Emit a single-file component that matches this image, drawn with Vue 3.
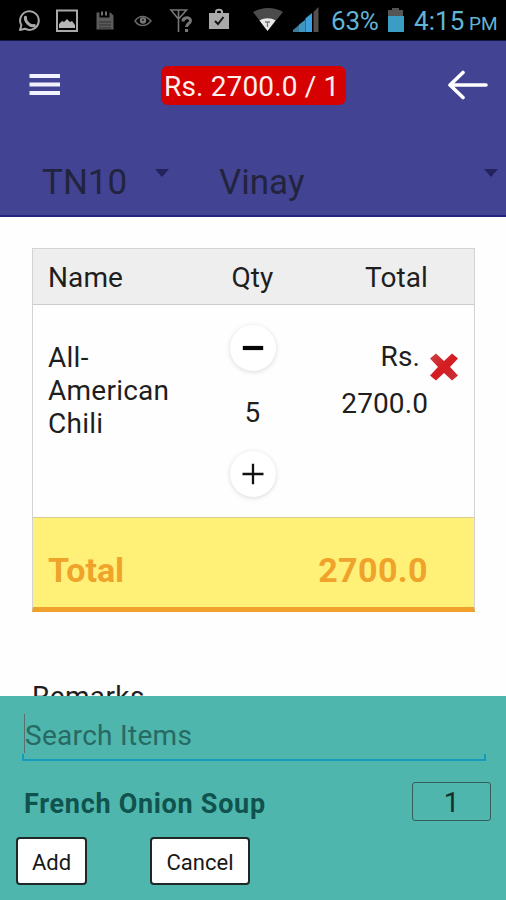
<script setup>
import { ref } from 'vue'

const table = ref('TN10')
const waiter = ref('Vinay')
const qty = ref(5)
const total = ref('2700.0')
</script>

<template>
  <div class="screen">
    <div class="status">
      <svg class="notifications" viewBox="0 0 253 40" width="253" height="40" fill="none">
        <g stroke="#a9a9a9" stroke-width="2">
          <path d="M20 30 21.4 25.2A9.3 9.3 0 1 1 25 28.7Z" stroke-linejoin="round" />
          <path d="M25.5 17.2c-1 4 4.500 9.500 8.800 8.300" stroke-width="3" stroke-linecap="round" />
          <rect x="57" y="10.500" width="20" height="20.500" />
        </g>
        <path d="M59 28V24l3-3 2 1 3-3 3 3 2-1 3 4v3Z" fill="#b5b5b5" />
        <path d="M96.500 12.500h3v5h10v-5h1l3 3v14h-17Z" fill="#5b5b5b" />
        <path d="M102 11.500v4M106 11.500v4" stroke="#707070" stroke-width="2" />
        <path d="M99 22h12M99 25h12M99 28h12" stroke="#303030" />
        <path d="M135 21c4-6 11-6 16 0-5 6-12 6-16 0Z" stroke="#686868" stroke-width="1.500" />
        <circle cx="143" cy="20.500" r="3.200" fill="#777" /><circle cx="143" cy="20" r="1" fill="#222" />
        <path d="M171 10h15.500l-7 8h-2ZM178.500 10v22" stroke="#777" stroke-width="1.600" />
        <path d="M183 21.500c0-5 7.500-5 7.500-.8 0 3-4 2.600-4 6.300" stroke="#777" stroke-width="3" />
        <path d="M185 29h3v3h-3Z" fill="#777" />
        <path d="M209 13h20v16h-20Z" fill="#aaa" />
        <path d="M216 13v-1c0-3 6-3 6 0v1" stroke="#aaa" stroke-width="2" />
        <path d="m215 21 3 3 5.500-7" stroke="#111" stroke-width="2" />
      </svg>
      <svg viewBox="0 0 76 40" width="76" height="40">
        <path d="M0 12C9 6.500 21 6.500 30 12L14.500 31Z" fill="#4b4b4b" />
        <path d="M6.500 20.500c5-3 11.500-3 16 0L14.500 31Z" fill="#e8e8e8" />
        <path d="M12 22h5M14.500 22v5" stroke="#777" stroke-width="1.300" />
        <path d="M40 32v-2l6-5v7Z" fill="#3a7c9f" />
        <path d="M46 32v-7.500l6-4.500v12Z" fill="#4194bd" />
        <path d="M52.300 32V18.500l6.700-5.500v19Z" fill="#3ba0dd" />
        <path d="M60.500 32V12l5-5v25Z" fill="#55504e" />
      </svg>
      <span class="percent">63%</span>
      <svg class="battery" viewBox="0 0 18 40" width="18" height="40">
        <path d="M1 10h4V8h7v2h4v7H1Z" fill="#555" />
        <path d="M1 16h16v16H1Z" fill="#3b9cc4" />
      </svg>
      <span class="clock">4:15</span><span class="pm">PM</span>
    </div>

    <header class="header">
      <div class="toolbar">
        <svg class="menu" viewBox="0 0 31 23" width="31" height="23" aria-label="Menu">
          <path d="M.5 3h30.500M.5 11.500h30.500M.5 20h30.500" stroke="#f2f2ff" stroke-width="4" />
        </svg>
        <div class="badge">Rs. {{ total }} / 1</div>
        <svg class="back" viewBox="0 0 40 30" width="40" height="30" fill="none" aria-label="Back">
          <path d="M38 15H3M15 2.500 2 15 15 27.500" stroke="#fff" stroke-width="3.600" stroke-linecap="round" stroke-linejoin="round" />
        </svg>
      </div>
      <div class="selectors">
        <div class="select table-select"><span>{{ table }}</span><i class="caret"></i></div>
        <div class="select waiter-select"><span>{{ waiter }}</span><i class="caret"></i></div>
      </div>
    </header>

    <main class="content">
      <section class="order">
        <div class="row head">
          <span>Name</span><span class="center">Qty</span><span class="right">Total</span>
        </div>
        <div class="row item">
          <div class="name">All-<br />American<br />Chili</div>
          <div class="stepper">
            <button class="round" aria-label="Decrease">
              <svg viewBox="0 0 22 22" width="22" height="22"><path d="M.8 11h20.400" stroke="#050505" stroke-width="4.200" /></svg>
            </button>
            <span class="qty">{{ qty }}</span>
            <button class="round" aria-label="Increase">
              <svg viewBox="0 0 22 22" width="22" height="22"><path d="M.5 11h21M11 .800v20.400" stroke="#111" stroke-width="2.300" /></svg>
            </button>
          </div>
          <div class="price"><span class="currency">Rs.</span><br />{{ total }}</div>
          <svg class="remove" viewBox="0 0 30 30" width="30" height="30" aria-label="Remove">
            <defs>
              <linearGradient id="cross" x1="0" y1="0" x2="1" y2="1">
                <stop offset="0" stop-color="#c94343" /><stop offset=".5" stop-color="#d51b20" /><stop offset="1" stop-color="#c3343a" />
              </linearGradient>
            </defs>
            <path d="m1 6.500 6-5 8 7.500 8-7.500 6 5-8 8.500 8 8.500-6 5-8-7.500-8 7.500-6-5 8-8.500Z" fill="url(#cross)" />
          </svg>
        </div>
        <div class="sum"><span class="sum-label">Total</span><span>{{ total }}</span></div>
      </section>
      <div class="remarks">Remarks</div>
    </main>

    <footer class="panel">
      <div class="search"><span class="cursor"></span><span>Search Items</span></div>
      <div class="found"><strong>French Onion Soup</strong><span class="count">1</span></div>
      <div class="actions"><button class="add">Add</button><button class="cancel">Cancel</button></div>
    </footer>
  </div>
</template>

<style>
body { margin: 0; overflow: hidden; }
</style>

<style scoped>
* { box-sizing: border-box; }
.screen { width: 506px; height: 900px; display: flex; flex-direction: column; overflow: hidden; background: #fefefe; font: 28px/33px Roboto, sans-serif; color: #1e1e1e; }
svg { display: block; flex: none; }
button { padding: 0; font: inherit; color: inherit; }
.status { height: 41px; flex: none; display: flex; background: #000; border-bottom: 1px solid #18194a; color: #62b4d5; font-size: 26px; line-height: 42px; white-space: nowrap; }
.percent { width: 56px; padding-left: 2px; letter-spacing: -0.2px; }
.battery { margin-left: 2px; }
.clock { margin-left: 9px; width: 55px; letter-spacing: 0.1px; }
.pm { font-size: 19px; line-height: 47px; letter-spacing: 0; }
.header { height: 176px; flex: none; background: #424393; border-bottom: 2px solid #252381; }
.toolbar { height: 90px; padding: 25px 18px 0 29px; display: flex; align-items: flex-start; }
.menu { margin-top: 7px; }
.badge { width: 185px; height: 39px; margin-left: 101px; border-radius: 7px; background: #d60000; color: #fff0ee; line-height: 42px; padding-left: 3px; letter-spacing: 0.15px; white-space: nowrap; }
.back { margin: 4px 0 0 auto; }
.selectors { display: flex; padding: 32px 8px 0 42px; }
.select { display: flex; justify-content: space-between; font-size: 35px; line-height: 40px; color: #22243e; }
.table-select { width: 127px; }
.waiter-select { flex: 1; margin-left: 50px; }
.caret { margin-top: 6px; width: 0; height: 0; border: 7px solid transparent; border-top: 8px solid #22225c; border-bottom: 0; align-self: flex-start; }
.content { flex: none; height: 479px; overflow: hidden; padding: 31px 31px 0 32px; }
.order { height: 364px; border: 1px solid #d3d3d3; border-bottom: 5px solid #efa12c; display: flex; flex-direction: column; }
.row { display: grid; grid-template-columns: 135px 139px 106px 1fr; padding-left: 15px; flex: none; letter-spacing: 0.1px; }
.head { height: 56px; line-height: 57px; background: #eee; border-bottom: 1px solid #ccc; }
.center { text-align: center; }
.right { text-align: right; }
.item { height: 212px; }
.name { padding-top: 36px; letter-spacing: 0.25px; }
.stepper { display: flex; flex-direction: column; align-items: center; padding-top: 20px; }
.round { width: 46px; height: 46px; border: 0; border-radius: 50%; background: #fff; display: grid; place-items: center; box-shadow: 0 1px 5px rgba(0, 0, 0, 0.15); }
.qty { height: 80px; line-height: 84px; }
.price { padding-top: 28px; text-align: right; line-height: 47px; }
.currency { padding-right: 8px; }
.remove { margin: 47px 0 0 1px; }
.sum { height: 90px; flex: none; background: #fff078; border-top: 1px solid #d5cd91; display: flex; justify-content: space-between; padding: 0 46px 0 15px; font-size: 34px; line-height: 105px; font-weight: 700; color: #efa32b; letter-spacing: 0.4px; }
.sum-label { letter-spacing: 0; }
.remarks { margin-top: 68px; white-space: nowrap; letter-spacing: 0.4px; }
.panel { flex: 1; min-height: 0; background: #4eb6ac; }
.search { margin: 1px 20px 0 22px; height: 64px; display: flex; align-items: center; padding: 12px 0 0 2px; color: #276963; letter-spacing: 0.3px; background: linear-gradient(#159bbb, #159bbb) bottom / 100% 2px no-repeat, linear-gradient(#159bbb, #159bbb) left bottom / 2px 7px no-repeat, linear-gradient(#159bbb, #159bbb) right bottom / 2px 7px no-repeat; }
.cursor { width: 1px; height: 39px; background: #596f70; margin-top: -3px; }
.found { height: 76px; padding: 21px 15px 0 24px; display: flex; justify-content: space-between; color: #10524e; }
.found strong { font-size: 27px; line-height: 44px; letter-spacing: 0.7px; }
.count { width: 79px; height: 39px; border: 1px solid #345f5d; border-radius: 3px; text-align: center; line-height: 40px; color: #172e2c; }
.actions { display: flex; gap: 63px; padding-left: 16px; }
.actions button { height: 48px; background: #fff; border: 2px solid #202827; border-radius: 4px; font-size: 22px; line-height: 47px; color: #181818; }
.add { width: 71px; }
.cancel { width: 100px; }
</style>
